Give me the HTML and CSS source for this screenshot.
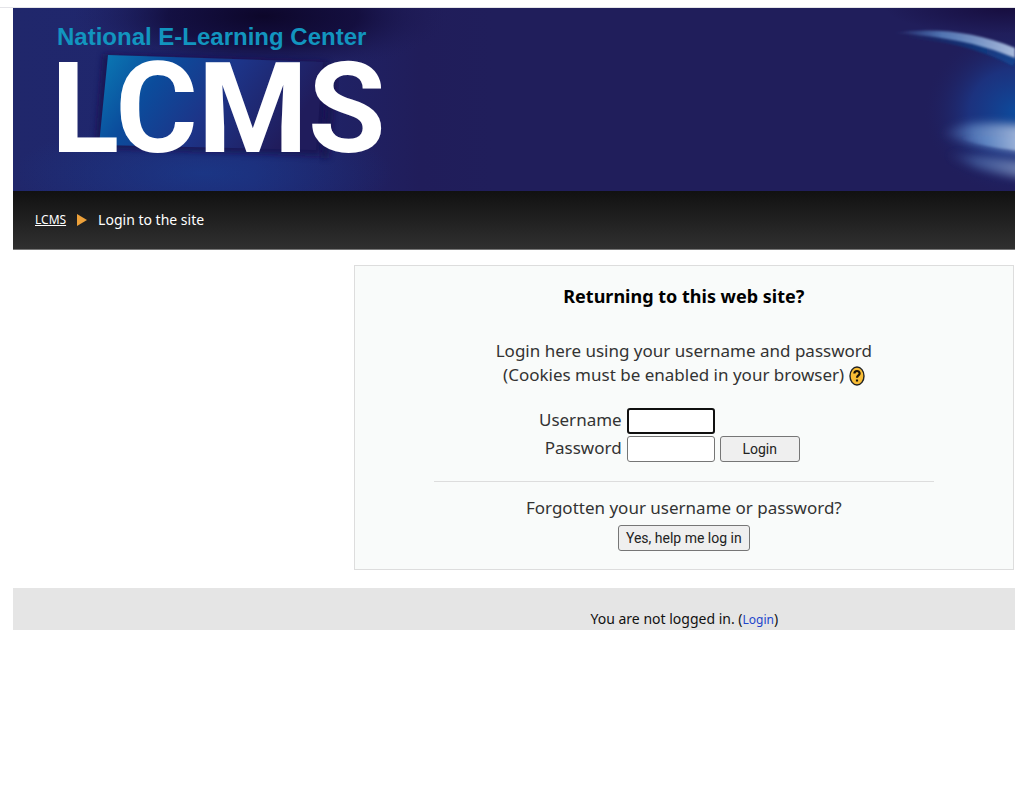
FILE: index.html
```html
<!DOCTYPE html>
<html lang="en">
<head>
    <meta charset="UTF-8">
    <meta name="viewport" content="width=device-width, initial-scale=1.0">
    <title>LCMS: Login to the site</title>
    <link rel="stylesheet" href="styles.css">
</head>
<body>
    <div class="topline"></div>
    <div class="page">
        <header class="banner">
            <!-- glow and tiles behind the logo -->
            <svg class="art art-left" width="480" height="183" viewBox="0 0 480 183" aria-hidden="true">
                <defs>
                    <linearGradient id="base" x1="0" x2="1" y1="0" y2="0">
                        <stop offset="0" stop-color="#20276b"/>
                        <stop offset="0.5" stop-color="#1f2670"/>
                        <stop offset="0.85" stop-color="#201d5a"/>
                        <stop offset="1" stop-color="#201e5b"/>
                    </linearGradient>
                    <radialGradient id="shade">
                        <stop offset="0" stop-color="#0c0526" stop-opacity="0.95"/>
                        <stop offset="0.5" stop-color="#0f0730" stop-opacity="0.7"/>
                        <stop offset="1" stop-color="#201e5b" stop-opacity="0"/>
                    </radialGradient>
                    <radialGradient id="glow">
                        <stop offset="0" stop-color="#17459a" stop-opacity="0.5"/>
                        <stop offset="1" stop-color="#17459a" stop-opacity="0"/>
                    </radialGradient>
                    <linearGradient id="tile" x1="0" x2="1" y1="0" y2="0.3">
                        <stop offset="0" stop-color="#0a7bb5"/>
                        <stop offset="0.3" stop-color="#0b4c9c"/>
                        <stop offset="0.6" stop-color="#1d3488"/>
                        <stop offset="1" stop-color="#201c5c"/>
                    </linearGradient>
                    <filter id="soft"><feGaussianBlur stdDeviation="3"/></filter>
                </defs>
                <rect width="480" height="183" fill="url(#base)"/>
                <ellipse cx="250" cy="8" rx="190" ry="60" fill="url(#shade)"/>
                <ellipse cx="190" cy="165" rx="190" ry="55" fill="url(#glow)"/>
                <path d="M90 46 L315 54 L308 148 L82 140 Z" fill="#15104a" opacity="0.7" filter="url(#soft)"/>
                <path d="M95 47 L310 54 L303 142 L86 137 Z" fill="url(#tile)"/>
                <path d="M316 62 h8 l-8 88 h-8 Z" fill="#130f45" opacity="0.7" filter="url(#soft)"/>
            </svg>
            <!-- light trails on the right edge -->
            <svg class="art art-right" width="160" height="183" viewBox="0 0 160 183" aria-hidden="true">
                <defs>
                    <linearGradient id="trail" x1="0" x2="1" y1="0" y2="0">
                        <stop offset="0" stop-color="#4a6ab0" stop-opacity="0"/>
                        <stop offset="0.4" stop-color="#5f87c4" stop-opacity="0.8"/>
                        <stop offset="1" stop-color="#a9bbdc"/>
                    </linearGradient>
                    <radialGradient id="blue">
                        <stop offset="0" stop-color="#0d4a9c"/>
                        <stop offset="0.5" stop-color="#1b3787" stop-opacity="0.8"/>
                        <stop offset="1" stop-color="#201e5b" stop-opacity="0"/>
                    </radialGradient>
                    <linearGradient id="under" x1="0" x2="1" y1="0" y2="0">
                        <stop offset="0" stop-color="#0d4f9c" stop-opacity="0"/>
                        <stop offset="1" stop-color="#0d4f9c" stop-opacity="0.7"/>
                    </linearGradient>
                    <radialGradient id="corner">
                        <stop offset="0" stop-color="#160c3c" stop-opacity="0.9"/>
                        <stop offset="1" stop-color="#160c3c" stop-opacity="0"/>
                    </radialGradient>
                    <filter id="haze" x="-20%" y="-50%" width="140%" height="200%"><feGaussianBlur stdDeviation="4"/></filter>
                    <filter id="edge" x="-20%" y="-50%" width="140%" height="200%"><feGaussianBlur stdDeviation="1"/></filter>
                </defs>
                <ellipse cx="150" cy="0" rx="120" ry="26" fill="url(#corner)"/>
                <ellipse cx="160" cy="104" rx="92" ry="85" fill="url(#blue)"/>
                <path d="M50 26 Q110 28 160 54" fill="none" stroke="url(#under)" stroke-width="9" filter="url(#edge)"/>
                <path d="M38 25 C80 19 120 24 160 40 L160 50 C120 34 90 29 38 25 Z" fill="url(#trail)" filter="url(#edge)"/>
                <path d="M85 126 C100 113 140 114 170 118 L170 144 C140 140 110 136 85 126 Z" fill="url(#trail)" filter="url(#haze)"/>
                <path d="M105 130 C130 126 150 129 170 132 L170 143 C140 140 120 136 105 130 Z" fill="url(#trail)" filter="url(#edge)"/>
                <path d="M90 146 C120 146 145 150 170 154 L170 170 C140 166 115 160 90 146 Z" fill="url(#trail)" opacity="0.6" filter="url(#haze)"/>
            </svg>
            <div class="brand">
                <p class="org">National E-Learning Center</p>
                <h1 class="logo">LCMS</h1>
            </div>
        </header>

        <nav class="navbar">
            <a href="#">LCMS</a>
            <svg width="10" height="12" viewBox="0 0 10 12" aria-hidden="true"><path d="M0 0 L10 6 L0 12 Z" fill="#eda13a"/></svg>
            <span>Login to the site</span>
        </nav>

        <main class="content">
            <section class="loginbox">
                <h2>Returning to this web site?</h2>
                <p class="desc">Login here using your username and password<br>
                    (Cookies must be enabled in your browser)
                    <a class="help" href="#" aria-label="Help"><svg width="16" height="20" viewBox="0 0 16 20">
                        <ellipse cx="8" cy="10" rx="7" ry="9" fill="#f9bd35" stroke="#222" stroke-width="1.4"/>
                        <path d="M5.4 7.6 C5.4 4.2 10.6 4.2 10.6 7.4 C10.6 9.4 8 9.4 8 11.8 M8 13.4 V15.6" fill="none" stroke="#1c1408" stroke-width="2.2"/>
                    </svg></a>
                </p>
                <form class="login">
                    <label for="username">Username</label>
                    <input id="username" class="focused" type="text" name="username">
                    <label for="password">Password</label>
                    <input id="password" type="password" name="password">
                    <button class="submit" type="button">Login</button>
                </form>
                <div class="forgot">
                    <p>Forgotten your username or password?</p>
                    <button type="button">Yes, help me log in</button>
                </div>
            </section>
        </main>

        <footer class="footer">
            <p>You are not logged in. (<a href="#">Login</a>)</p>
        </footer>
    </div>
</body>
</html>
```
FILE: styles.css
```css
* {
    box-sizing: border-box;
}

body {
    margin: 0;
    background-color: #fff;
    color: #333;
    font-family: "Noto Sans", sans-serif;
    font-size: 17px;
    line-height: 24px;
}

h1, h2, p {
    margin: 0;
}

.topline {
    height: 8px;
    border-bottom: 1px solid #e4e4e8;
}

.page {
    margin-left: 13px;
}

/* banner */
.banner {
    position: relative;
    height: 183px;
    overflow: hidden;
    background-color: #201e5b;
}

.art {
    position: absolute;
    top: 0;
}

.art-left {
    left: 0;
}

.art-right {
    right: 0;
}

.brand {
    position: relative;
    padding: 15px 0 0 44px;
}

.org {
    color: #1295bf;
    font: bold 24px/28px "Liberation Sans", sans-serif;
}

.logo {
    margin-left: -6px;
    color: #fff;
    font: bold 126px/116px Roboto, sans-serif;
}

/* breadcrumb bar */
.navbar {
    display: flex;
    align-items: center;
    gap: 11px;
    height: 59px;
    padding-left: 22px;
    background: linear-gradient(#111, #303030);
    border-bottom: 1px solid #777;
    color: #fff;
    font-size: 14px;
}

.navbar a {
    color: #fff;
    font-size: 12px;
}

/* login box */
.content {
    padding: 15px 1px 18px 34%;
}

.loginbox {
    padding: 18px 79px 18px;
    background-color: #f9fbfa;
    border: 1px solid #ddd;
    text-align: center;
}

.loginbox h2 {
    color: #000;
    font-size: 18px;
    line-height: 24px;
}

.desc {
    margin-top: 31px;
}

.help svg {
    vertical-align: -5px;
}

.login {
    display: grid;
    grid-template-columns: 188px 88px 80px;
    column-gap: 5px;
    row-gap: 2px;
    margin-top: 21px;
    text-align: right;
}

.login label {
    grid-column: 1;
}

.login input {
    grid-column: 2;
    width: 88px;
    height: 26px;
    border: 1px solid #767676;
    border-radius: 3px;
    background-color: #fff;
}

.login .focused {
    border: 2px solid #101010;
}

button {
    height: 26px;
    padding: 0 7px;
    border: 1px solid #767676;
    border-radius: 3px;
    background-color: #efefef;
    color: #222;
    font: 14px Roboto, sans-serif;
}

.forgot {
    margin-top: 19px;
    padding-top: 14px;
    border-top: 1px solid #ddd;
}

.forgot button {
    margin-top: 5px;
}

/* footer */
.footer {
    padding: 20px 0 0 34%;
    background-color: #e5e5e5;
    text-align: center;
    color: #111;
    font-size: 14px;
    line-height: 21px;
}

.footer a {
    color: #24c;
    font-size: 12px;
    text-decoration: none;
}
```
